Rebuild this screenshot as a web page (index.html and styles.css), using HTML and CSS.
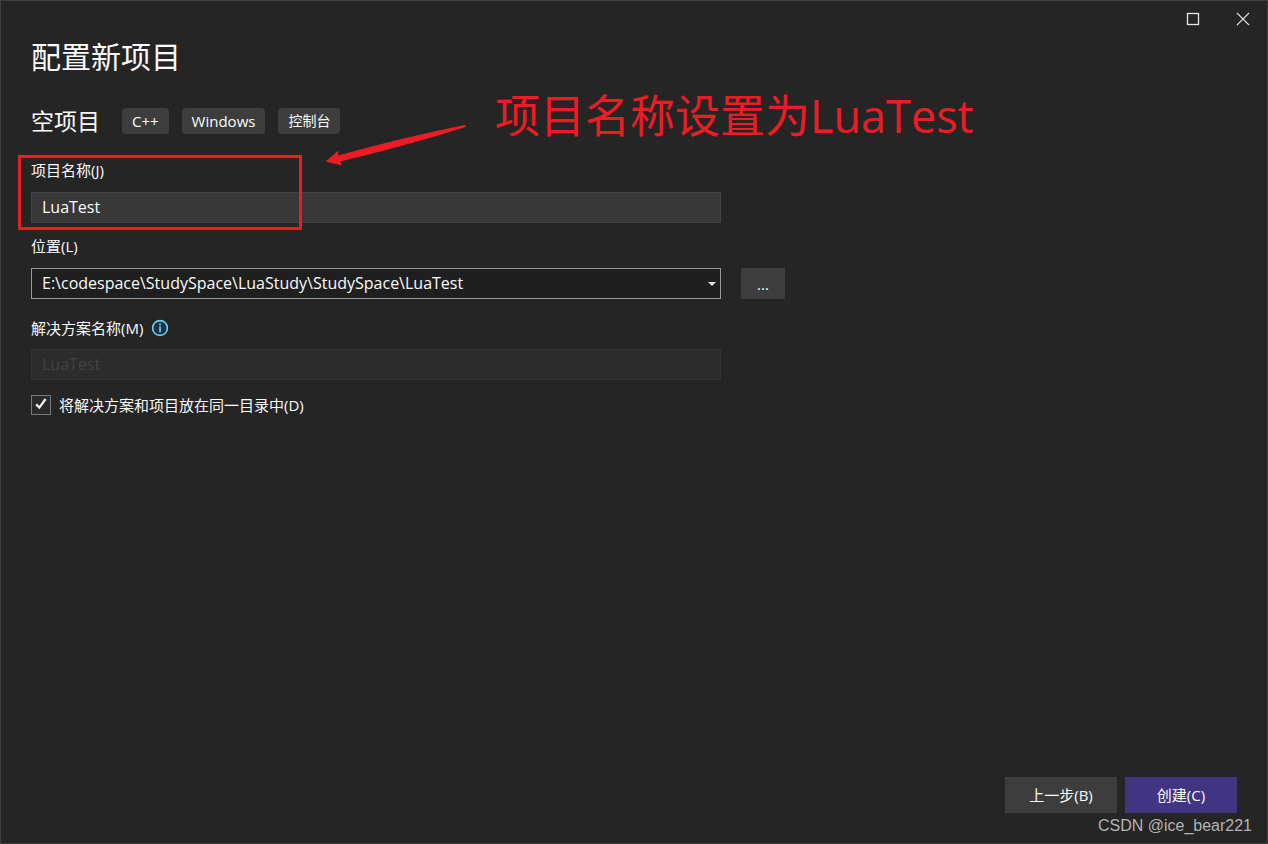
FILE: index.html
```html
<!DOCTYPE html>
<html lang="zh-CN">
<head>
<meta charset="utf-8">
<meta name="viewport" content="width=device-width, initial-scale=1">
<title>配置新项目</title>
<link rel="stylesheet" href="styles.css">
</head>
<body>
<div class="window">
  <header class="titlebar">
    <button class="window-button" type="button" aria-label="最大化">
      <svg width="14" height="14" viewBox="0 0 14 14"><rect x="1.5" y="1.5" width="11" height="11" fill="none" stroke="#e6e6e6" stroke-width="1.3"/></svg>
    </button>
    <button class="window-button" type="button" aria-label="关闭">
      <svg width="14" height="14" viewBox="0 0 14 14"><path d="M1 1 13 13M13 1 1 13" fill="none" stroke="#dedede" stroke-width="1.1"/></svg>
    </button>
  </header>
  <main class="content">
    <h1 class="title">配置新项目</h1>
    <div class="template">
      <h2 class="template-name">空项目</h2>
      <ul class="tags">
        <li class="tag">C++</li>
        <li class="tag">Windows</li>
        <li class="tag tag-cjk">控制台</li>
      </ul>
    </div>
    <form class="form" id="project-form">
      <div class="field">
        <label class="label" for="project-name">项目名称(J)</label>
        <input class="input" id="project-name" type="text" value="LuaTest">
      </div>
      <div class="field">
        <label class="label" for="location">位置(L)</label>
        <div class="row">
          <div class="combo">
            <select class="input select" id="location">
              <option>E:\codespace\StudySpace\LuaStudy\StudySpace\LuaTest</option>
            </select>
            <svg class="combo-arrow" width="8" height="4" viewBox="0 0 8 4"><path d="M0 0H8L4 4Z" fill="#e6e6e6"/></svg>
          </div>
          <button class="browse" type="button">...</button>
        </div>
      </div>
      <div class="field field-solution">
        <div class="label-row">
          <label class="label" for="solution-name">解决方案名称(M)</label>
          <svg class="info" width="18" height="18" viewBox="0 0 18 18"><circle cx="9" cy="9" r="7.4" fill="#183440" stroke="#6ccdf0" stroke-width="1.7"/><path d="M8.2 4.6h1.7v1.8H8.2ZM8.2 7.6h1.7v5.6H8.2Z" fill="#6ccdf0"/></svg>
        </div>
        <input class="input" id="solution-name" type="text" value="LuaTest" disabled>
      </div>
      <div class="check-row">
        <span class="check-box">
          <input class="check" id="same-dir" type="checkbox" checked>
          <svg class="check-mark" width="12" height="12" viewBox="0 0 12 12"><path d="M1.2 6.4 4.4 9.6 10.6 1" fill="none" stroke="#f0f0f0" stroke-width="2.3"/></svg>
        </span>
        <label class="label" for="same-dir">将解决方案和项目放在同一目录中(D)</label>
      </div>
    </form>
  </main>
  <footer class="footer">
    <button class="button" type="button">上一步(B)</button>
    <button class="button button-primary" type="submit" form="project-form">创建(C)</button>
  </footer>
  <div class="highlight"></div>
  <svg class="arrow" width="142" height="44" viewBox="0 0 142 44"><path d="M0.5 38.5 13.5 27.5 13 32.5 Q80 14 139.5 2 Q142 3 140 4.2 Q80 23 15 38.5 L17 42.5Z" fill="#ed1c24"/></svg>
  <p class="note">项目名称设置为LuaTest</p>
  <p class="watermark">CSDN @ice_bear221</p>
</div>
</body>
</html>
```
FILE: styles.css
```css
* {
  box-sizing: border-box;
}

body {
  margin: 0;
  background: #252525;
  color: #fafafa;
  font: 15px/20px "Open Sans", "Noto Sans CJK SC", sans-serif;
}

button,
input,
select {
  font: inherit;
  color: inherit;
}

h1,
h2,
p,
ul {
  margin: 0;
  padding: 0;
  font-weight: 400;
}

.window {
  position: relative;
  display: flex;
  flex-direction: column;
  min-height: 100vh;
  background: #252525;
  border: 1px solid #3f3f3f;
}

.titlebar {
  display: flex;
  justify-content: flex-end;
  height: 36px;
}

.window-button {
  display: flex;
  align-items: center;
  justify-content: center;
  width: 50px;
  height: 36px;
  padding: 0 0 0 2px;
  border: 0;
  background: none;
}

.content {
  flex: 1;
  padding: 0 30px;
}

.title {
  font-size: 30px;
  line-height: 40px;
}

.template {
  display: flex;
  align-items: center;
  gap: 22px;
  margin-top: 28px;
}

.template-name {
  font-size: 23px;
  line-height: 32px;
}

.tags {
  display: flex;
  gap: 13px;
  list-style: none;
}

.tag {
  padding: 3px 10px;
  border-radius: 4px;
  background: #3d3d3d;
  line-height: 20px;
}

.tag-cjk {
  font-size: 14px;
}

.form {
  margin-top: 23px;
}

.field {
  display: grid;
  gap: 12px;
  margin-bottom: 13px;
}

.field-solution {
  gap: 11px;
  margin-top: 19px;
}

.label-row {
  display: flex;
  align-items: center;
  gap: 8px;
}

.input {
  display: block;
  width: 100%;
  max-width: 690px;
  height: 31px;
  padding: 0 10px 1px;
  border: 1px solid #434343;
  border-radius: 0;
  background: #383838;
  font-size: 16px;
}

.input:disabled {
  border-color: #313131;
  background: #2c2c2c;
  color: #434343;
}

.row {
  display: flex;
  gap: 20px;
}

.combo {
  position: relative;
  flex: 0 1 690px;
  min-width: 0;
}

.select {
  appearance: none;
  border-color: #999999;
  background: #1f1f1f;
}

.combo-arrow {
  position: absolute;
  top: 14px;
  right: 5px;
  pointer-events: none;
}

.browse {
  width: 44px;
  height: 31px;
  padding: 0;
  border: 0;
  background: #3d3d3d;
}

.check-row {
  display: flex;
  align-items: center;
  gap: 8px;
  margin-top: 15px;
}

.check-box {
  position: relative;
  width: 20px;
  height: 20px;
}

.check {
  appearance: none;
  display: block;
  width: 20px;
  height: 20px;
  margin: 0;
  border: 1px solid #7a7a7a;
  background: #2a2a2a;
}

.check-mark {
  position: absolute;
  top: 3px;
  left: 4px;
  pointer-events: none;
}

.check:not(:checked) + .check-mark {
  display: none;
}

.footer {
  display: flex;
  justify-content: flex-end;
  gap: 8px;
  padding: 0 30px 30px;
}

.button {
  width: 112px;
  height: 36px;
  padding: 0;
  border: 0;
  background: #3d3d3d;
}

.button-primary {
  background: #413482;
}

.highlight {
  position: absolute;
  top: 154px;
  left: 17px;
  width: 284px;
  height: 75px;
  border: 3px solid #ed1c24;
  pointer-events: none;
}

.arrow {
  position: absolute;
  top: 122px;
  left: 324px;
}

.note {
  position: absolute;
  top: 85px;
  left: 494px;
  color: #ed1c24;
  font-size: 45px;
  line-height: 60px;
  white-space: nowrap;
}

.watermark {
  position: absolute;
  right: 15px;
  bottom: 7px;
  color: #b4b4b4;
  font: 16px/20px "Liberation Sans", sans-serif;
}
```
